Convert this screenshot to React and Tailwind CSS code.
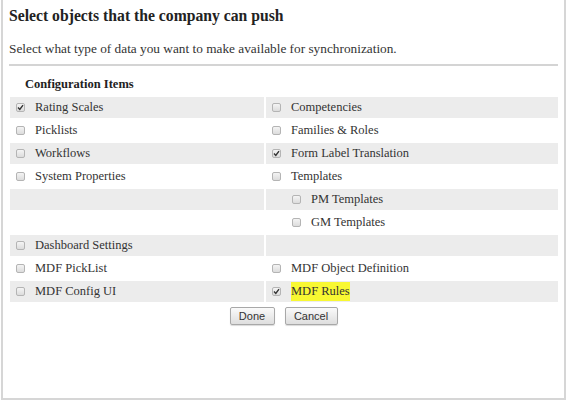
import React from 'react';

const rows = [
  [{ label: 'Rating Scales', checked: true }, { label: 'Competencies' }],
  [{ label: 'Picklists' }, { label: 'Families & Roles' }],
  [{ label: 'Workflows' }, { label: 'Form Label Translation', checked: true }],
  [{ label: 'System Properties' }, { label: 'Templates' }],
  [null, { label: 'PM Templates', nested: true }],
  [null, { label: 'GM Templates', nested: true }],
  [{ label: 'Dashboard Settings' }, null],
  [{ label: 'MDF PickList' }, { label: 'MDF Object Definition' }],
  [{ label: 'MDF Config UI' }, { label: 'MDF Rules', checked: true, highlight: true }],
];

function Checkbox({ checked }) {
  return (
    <span className="w-[9px] h-[9px] shrink-0 rounded-[2px] border border-[#b4b4b4] bg-gradient-to-b from-[#f4f4f4] to-[#dcdcdc] flex items-center justify-center">
      {checked && (
        <svg width="7" height="7" viewBox="0 0 7 7">
          <path d="M1 3.6 L2.8 5.4 L6 1.2" fill="none" stroke="#333" strokeWidth="1.4" />
        </svg>
      )}
    </span>
  );
}

function Cell({ item, shaded }) {
  return (
    <div className={`h-[21px] flex items-center ${shaded ? 'bg-[#ececec]' : 'bg-white'}`}>
      {item && (
        <div className={`flex items-center gap-[10px] ${item.nested ? 'pl-[26px]' : 'pl-[6px]'}`}>
          <Checkbox checked={item.checked} />
          <span className={`text-[12.5px] text-[#333] ${item.highlight ? 'bg-[#f8f832]' : ''}`}>{item.label}</span>
        </div>
      )}
    </div>
  );
}

export default function App() {
  return (
    <div className="w-[567px] h-[400px] bg-white font-['Liberation_Serif',serif]">
      <div className="ml-[1px] w-[565px] h-[400px] border-l-2 border-r-2 border-b-2 border-[#d6d6d6] pl-[6px] pr-[5px]">
        <h1 className="pt-[7px] text-[15.7px] font-bold text-[#222] leading-[18px]">Select objects that the company can push</h1>
        <p className="mt-[16px] text-[13.3px] text-[#333] leading-[16px]">Select what type of data you want to make available for synchronization.</p>
        <div className="mt-[7px] h-[2px] w-[549px] bg-[#d4d4d4]" />
        <div className="ml-[16px] mt-[10px] text-[12.5px] font-bold text-[#222] leading-[16px]">Configuration Items</div>
        <div className="ml-[1px] mt-[5px] grid grid-cols-[254px_292px] gap-[2px]">
          {rows.map((row, i) => (
            <React.Fragment key={i}>
              <Cell item={row[0]} shaded={i % 2 === 0} />
              <Cell item={row[1]} shaded={i % 2 === 0} />
            </React.Fragment>
          ))}
        </div>
        <div className="w-[549px] mt-[5px] flex justify-center gap-[10px] font-['Liberation_Sans',sans-serif] text-[11px] text-[#333]">
          <button className="w-[45px] h-[18px] rounded-[2px] border border-[#a8a8a8] bg-gradient-to-b from-[#fafafa] to-[#dedede] shadow-[0_1px_1px_rgba(0,0,0,0.15)]">Done</button>
          <button className="w-[53px] h-[18px] rounded-[2px] border border-[#a8a8a8] bg-gradient-to-b from-[#fafafa] to-[#dedede] shadow-[0_1px_1px_rgba(0,0,0,0.15)]">Cancel</button>
        </div>
      </div>
    </div>
  );
}
